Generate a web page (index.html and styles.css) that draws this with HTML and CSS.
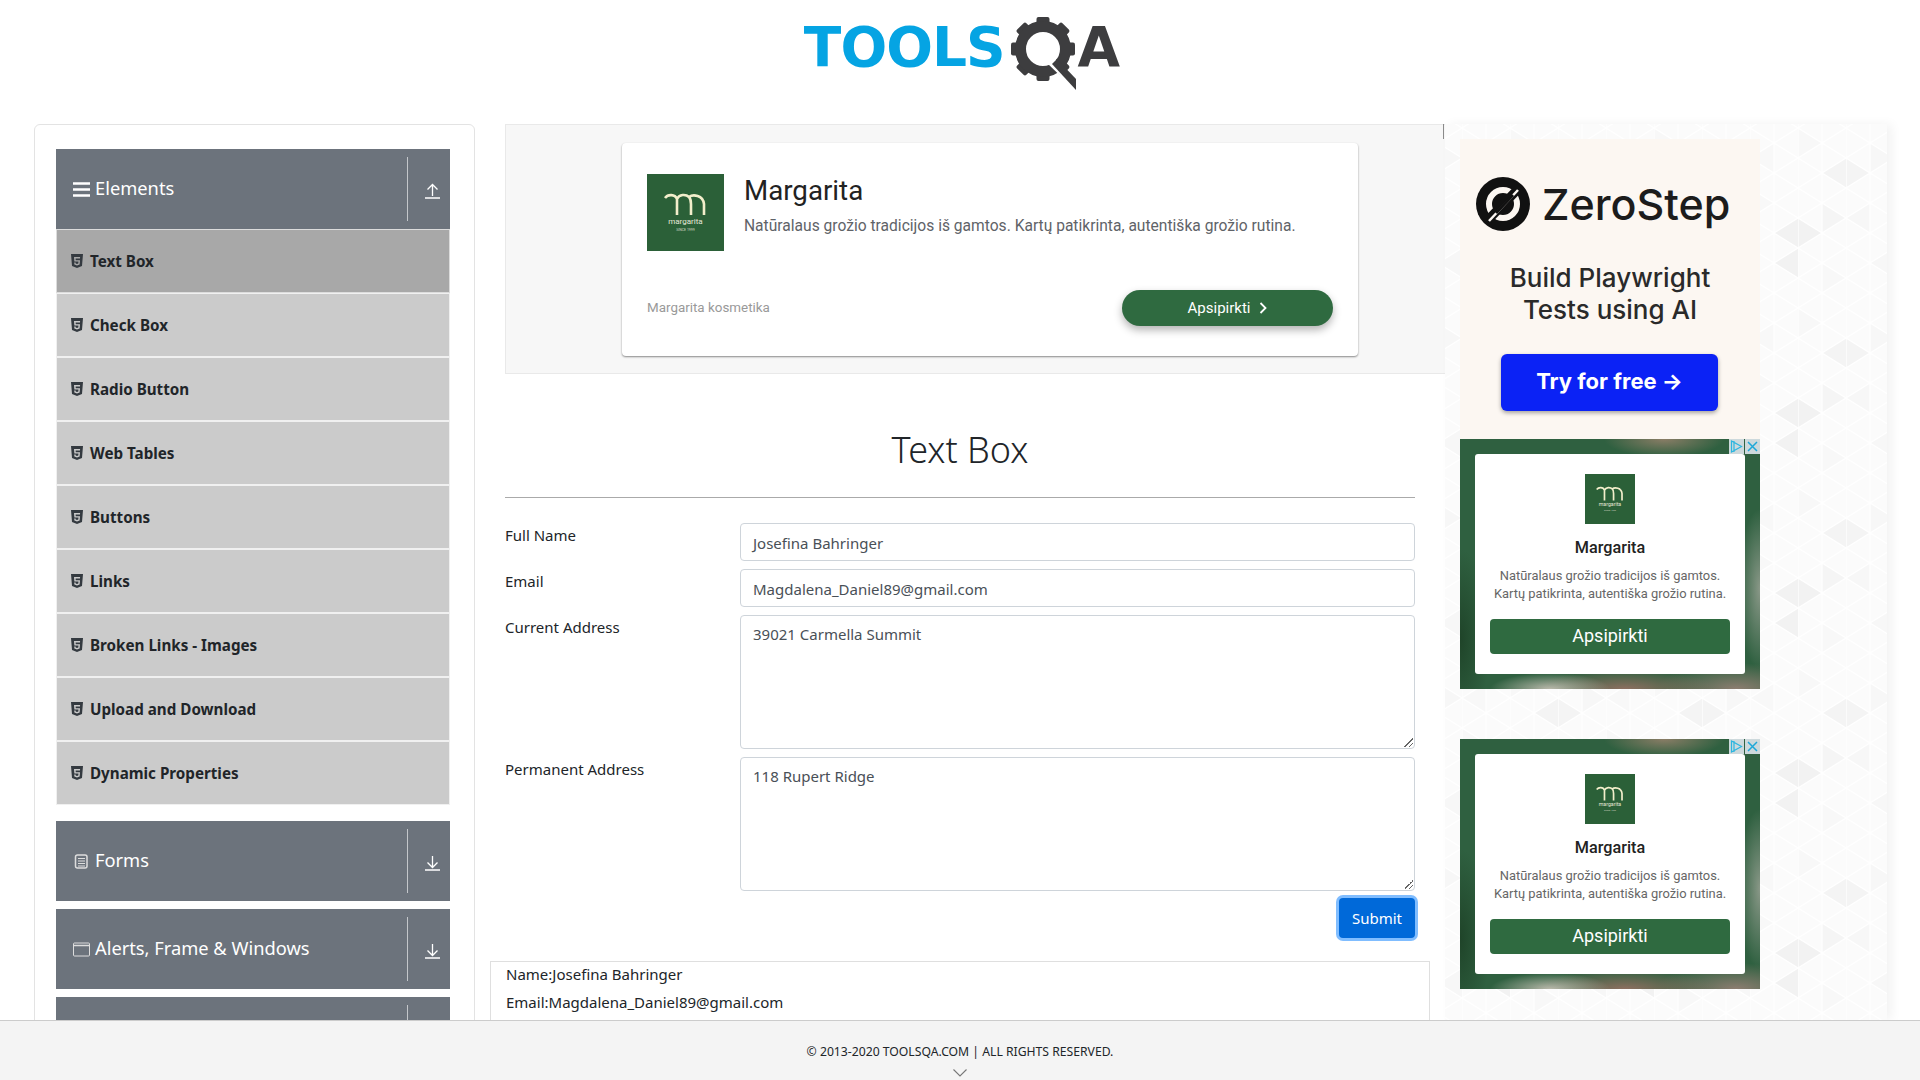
FILE: index.html
```html
<!DOCTYPE html>
<html>
<head>
	<title>ToolsQA</title>
	<link rel="stylesheet" href="styles.css">
</head>
<body>
	<header class="top">
		<div class="logo">
			<span class="logo_tools">TOOLS</span>
			<svg class="logo_gear" width="72" height="76" viewBox="0 0 72 76">
				<g fill="#3d3d3f" transform="translate(33 33)">
					<rect x="-6.5" y="-32" width="13" height="14" rx="2"/>
					<rect x="-6.5" y="-32" width="13" height="14" rx="2" transform="rotate(45)"/>
					<rect x="-6.5" y="-32" width="13" height="14" rx="2" transform="rotate(90)"/>
					<rect x="-6.5" y="-32" width="13" height="14" rx="2" transform="rotate(135)"/>
					<rect x="-6.5" y="-32" width="13" height="14" rx="2" transform="rotate(180)"/>
					<rect x="-6.5" y="-32" width="13" height="14" rx="2" transform="rotate(225)"/>
					<rect x="-6.5" y="-32" width="13" height="14" rx="2" transform="rotate(270)"/>
					<rect x="-6.5" y="-32" width="13" height="14" rx="2" transform="rotate(315)"/>
				</g>
				<circle cx="33" cy="33" r="22.5" fill="none" stroke="#3d3d3f" stroke-width="11"/>
				<path d="M37 47 L43 41 L66 66 L66 75 Z" fill="#fff"/>
				<path d="M42 48 L47 43 L66 63 L66 74 Z" fill="#3d3d3f"/>
			</svg>
			<span class="logo_a">A</span>
		</div>
	</header>

	<div class="page">
		<aside class="left_panel">
			<div class="group">
				<div class="group_head">
					<span class="group_title">
						<svg class="group_icon" width="17" height="15" viewBox="0 0 17 15"><path d="M0 1.500h17M0 7.500h17M0 13.500h17" stroke="#fff" stroke-width="2.400"/></svg>
						Elements
					</span>
					<span class="group_arrow">
						<svg width="15" height="16" viewBox="0 0 15 16"><path d="M7.500 13V1.500M2.500 6.500l5-5 5 5M0 15h15" fill="none" stroke="#fff" stroke-width="1.300"/></svg>
					</span>
				</div>
				<ul class="menu">
					<li class="active"><svg class="h5"><use href="#html5"/></svg>Text Box</li>
					<li><svg class="h5"><use href="#html5"/></svg>Check Box</li>
					<li><svg class="h5"><use href="#html5"/></svg>Radio Button</li>
					<li><svg class="h5"><use href="#html5"/></svg>Web Tables</li>
					<li><svg class="h5"><use href="#html5"/></svg>Buttons</li>
					<li><svg class="h5"><use href="#html5"/></svg>Links</li>
					<li><svg class="h5"><use href="#html5"/></svg>Broken Links - Images</li>
					<li><svg class="h5"><use href="#html5"/></svg>Upload and Download</li>
					<li><svg class="h5"><use href="#html5"/></svg>Dynamic Properties</li>
				</ul>
			</div>
			<div class="group">
				<div class="group_head">
					<span class="group_title">
						<svg class="group_icon" width="17" height="15" viewBox="0 0 17 15"><rect x="2.500" y="1" width="11.500" height="13" rx="2" fill="none" stroke="#ddd" stroke-width="1.500"/><path d="M5 4.500h7M5 7h7M5 9.500h7M5 12h7" stroke="#ddd"/></svg>
						Forms
					</span>
					<span class="group_arrow"><svg width="15" height="16" viewBox="0 0 15 16"><path d="M7.500 1v11.500M2.500 7.500l5 5 5-5M0 15h15" fill="none" stroke="#fff" stroke-width="1.300"/></svg></span>
				</div>
			</div>
			<div class="group">
				<div class="group_head">
					<span class="group_title">
						<svg class="group_icon" width="17" height="15" viewBox="0 0 17 15"><rect x=".5" y="1" width="16" height="13" rx="1" fill="none" stroke="#ddd"/><path d="M.5 3.500h16" stroke="#ddd" stroke-width="1.500"/></svg>
						Alerts, Frame &amp; Windows
					</span>
					<span class="group_arrow"><svg width="15" height="16" viewBox="0 0 15 16"><path d="M7.500 1v11.500M2.500 7.500l5 5 5-5M0 15h15" fill="none" stroke="#fff" stroke-width="1.300"/></svg></span>
				</div>
			</div>
			<div class="group">
				<div class="group_head">
					<span class="group_title">Widgets</span>
					<span class="group_arrow"></span>
				</div>
			</div>
		</aside>

		<main class="center">
			<div class="ad_top">
				<div class="ad_card">
					<div class="ad_card_top">
						<svg class="m_logo" width="77" height="77"><use href="#mlogo"/></svg>
						<div>
							<div class="ad_card_title">Margarita</div>
							<div class="ad_card_text">Natūralaus grožio tradicijos iš gamtos. Kartų patikrinta, autentiška grožio rutina.</div>
						</div>
					</div>
					<div class="ad_card_bottom">
						<span class="ad_card_brand">Margarita kosmetika</span>
						<span class="ad_card_btn">Apsipirkti
							<svg width="8" height="12" viewBox="0 0 8 12"><path d="M1.500 1l5 5-5 5" fill="none" stroke="#fff" stroke-width="1.800"/></svg>
						</span>
					</div>
				</div>
			</div>

			<h1 class="page_title">Text Box</h1>

			<form class="user_form">
				<div class="form_row">
					<label>Full Name</label>
					<div class="field">Josefina Bahringer</div>
				</div>
				<div class="form_row">
					<label>Email</label>
					<div class="field">Magdalena_Daniel89@gmail.com</div>
				</div>
				<div class="form_row">
					<label>Current Address</label>
					<div class="field area">39021 Carmella Summit</div>
				</div>
				<div class="form_row">
					<label>Permanent Address</label>
					<div class="field area">118 Rupert Ridge</div>
				</div>
				<div class="submit_row">
					<span class="submit">Submit</span>
				</div>
			</form>

			<div class="output">
				<p>Name:Josefina Bahringer</p>
				<p>Email:Magdalena_Daniel89@gmail.com</p>
			</div>
		</main>

		<aside class="right_ads">
			<svg class="tri_bg" width="442" height="896">
				<defs>
					<pattern id="tri_lines" width="48" height="30" patternUnits="userSpaceOnUse" patternTransform="translate(17 4)">
						<path d="M0 0L24 15L0 30M48 0L24 15L48 30M0 0V30M24 0V30" fill="none" stroke="#fff" stroke-width="1.200"/>
					</pattern>
					<pattern id="tri_dark" width="144" height="180" patternUnits="userSpaceOnUse" patternTransform="translate(65 4)">
						<path d="M144 90V120L120 105ZM0 90V120L24 105Z" fill="#f2f2f2"/>
						<path d="M48 30V60L24 45ZM48 30V60L72 45Z" fill="#f4f4f4"/>
						<path d="M144 120V150L120 135Z" fill="#f2f2f2"/>
						<path d="M24 75V105L48 90Z" fill="#f5f5f5"/>
						<path d="M72 15V45L96 30ZM96 120V150L72 135ZM72 75V105L48 90Z" fill="#f7f7f7"/>
						<path d="M120 15V45L96 30ZM24 135V165L48 150ZM96 60V90L120 75ZM0 0V30L24 15Z" fill="#f8f8f8"/>
					</pattern>
				</defs>
				<rect width="442" height="896" fill="#fbfbfb"/>
				<rect width="442" height="896" fill="url(#tri_dark)"/>
				<rect width="442" height="896" fill="url(#tri_lines)"/>
			</svg>
			<div class="zs_ad">
				<div class="zs_brand">
					<svg width="54" height="54" viewBox="0 0 54 54">
						<circle cx="27" cy="27" r="27" fill="#111"/>
						<circle cx="27" cy="27" r="14" fill="none" stroke="#fcf7f2" stroke-width="6"/>
						<path d="M10 45L44 10" stroke="#111" stroke-width="9"/>
						<path d="M13 44L42 13" stroke="#fcf7f2" stroke-width="2.500"/>
						<path d="M20 36L37 18" stroke="#111" stroke-width="3"/>
					</svg>
					<span>ZeroStep</span>
				</div>
				<div class="zs_text">Build Playwright<br>Tests using AI</div>
				<div class="zs_btn">Try for free →</div>
			</div>
			<div class="m_ad">
				<div class="ad_marks">
					<svg width="15" height="15" viewBox="0 0 15 15"><path d="M2.500 2v11l10-5.500zM5 2v11" fill="none" stroke="#2bb5e0" stroke-width="1.200"/></svg>
					<svg width="15" height="15" viewBox="0 0 15 15"><path d="M3 3l9 9M12 3l-9 9" stroke="#1ea7d8" stroke-width="1.500"/></svg>
				</div>
				<div class="m_box">
					<svg class="m_logo" width="50" height="50" viewBox="0 0 77 77"><use href="#mlogo"/></svg>
					<div class="m_title">Margarita</div>
					<div class="m_text">Natūralaus grožio tradicijos iš gamtos.<br>Kartų patikrinta, autentiška grožio rutina.</div>
					<div class="m_btn">Apsipirkti</div>
				</div>
			</div>
			<div class="m_ad second">
				<div class="ad_marks">
					<svg width="15" height="15" viewBox="0 0 15 15"><path d="M2.500 2v11l10-5.500zM5 2v11" fill="none" stroke="#2bb5e0" stroke-width="1.200"/></svg>
					<svg width="15" height="15" viewBox="0 0 15 15"><path d="M3 3l9 9M12 3l-9 9" stroke="#1ea7d8" stroke-width="1.500"/></svg>
				</div>
				<div class="m_box">
					<svg class="m_logo" width="50" height="50" viewBox="0 0 77 77"><use href="#mlogo"/></svg>
					<div class="m_title">Margarita</div>
					<div class="m_text">Natūralaus grožio tradicijos iš gamtos.<br>Kartų patikrinta, autentiška grožio rutina.</div>
					<div class="m_btn">Apsipirkti</div>
				</div>
			</div>
		</aside>
	</div>

	<footer class="bottom">
		<span>© 2013-2020 TOOLSQA.COM | ALL RIGHTS RESERVED.</span>
		<svg class="bottom_arrow" width="14" height="8" viewBox="0 0 14 8"><path d="M.5 .5L7 7L13.500 .5" fill="none" stroke="#777" stroke-width="1.100"/></svg>
	</footer>

	<svg class="defs" width="0" height="0">
		<defs>
			<symbol id="html5" viewBox="0 0 12 14">
				<path fill-rule="evenodd" fill="#343a40" d="M0 0H12L11 12L6 14L1 12ZM3 3L3.400 7.500H7.500L7.300 9.500L6 10L4.700 9.500L4.600 8.600H3.200L3.400 10.600L6 11.600L8.600 10.600L9 6.200H4.700L4.600 4.400H9L9.100 3Z"/>
			</symbol>
			<symbol id="mlogo" viewBox="0 0 77 77">
				<rect width="77" height="77" fill="#2b6038"/>
				<path d="M18 24C21 20 28 20 30 25V41M30 25C32 20 39 20 42 23C46 20 56 21 57 30V41M42 23C44 25 44 27 44 30V41" fill="none" stroke="#f2eecb" stroke-width="2.600"/>
				<text x="38.500" y="50" text-anchor="middle" font-family="Roboto, sans-serif" font-size="8" fill="#e8e8d8">margarita</text>
				<text x="38.500" y="57" text-anchor="middle" font-family="Roboto, sans-serif" font-size="3.500" fill="#d8d8c8">SINCE 1999</text>
			</symbol>
		</defs>
	</svg>
</body>
</html>
```

FILE: styles.css
```css
* {
	margin: 0;
	padding: 0;
	box-sizing: border-box;
}

ul {
	list-style: none;
}

html,
body {
	height: 100%;
	overflow: hidden;
}

body {
	background-color: #fff;
	color: #212529;
	font-family: "Noto Sans", "Open Sans", sans-serif;
	font-size: 15px;
}

.top {
	height: 124px;
	display: flex;
	justify-content: center;
}

.logo {
	display: flex;
	align-items: flex-start;
	padding-top: 16px;
	margin-left: 4px;
	height: 100px;
}

.logo_tools,
.logo_a {
	font-family: "DejaVu Sans", sans-serif;
	font-weight: 700;
	font-size: 55px;
	line-height: 44px;
	padding-top: 9px;
}

.logo_tools {
	color: #05a4e3;
	letter-spacing: -1px;
}

.logo_a {
	color: #3d3d3f;
	margin-left: -4px;
}

.logo_gear {
	margin-left: 5px;
}

.page {
	display: flex;
	align-items: flex-start;
	padding-left: 34px;
}

/* left menu */
.left_panel {
	width: 441px;
	height: 1000px;
	border: 1px solid #e3e3e3;
	border-radius: 6px;
	padding: 24px 24px 0 21px;
	margin-right: 30px;
	flex-shrink: 0;
}

.group {
	margin-bottom: 8px;
}

.group:first-child {
	margin-bottom: 16px;
}

.group_head {
	height: 80px;
	background-color: #6c737c;
	color: #fff;
	display: flex;
	align-items: center;
	justify-content: space-between;
	padding: 8px 10px 8px 17px;
}

.group_title {
	font-size: 18.300px;
	display: flex;
	align-items: center;
	gap: 5px;
	margin-top: -3px;
}

.group_icon {
	margin-top: 4px;
}

.group_arrow {
	width: 33px;
	height: 64px;
	border-left: 1px solid #c4c7cb;
	display: flex;
	align-items: center;
	justify-content: flex-end;
	padding-top: 4px;
}

.menu li {
	height: 64px;
	background-color: #cbcbcb;
	border: 1px solid #f0f0f0;
	display: flex;
	align-items: center;
	padding-left: 14px;
	font-weight: 700;
	font-size: 15.200px;
}

.menu li.active {
	background-color: #a8a8a8;
	border-color: #dcdcdc;
}

.h5 {
	width: 12px;
	height: 14px;
	margin-right: 7px;
}

/* middle */
.center {
	width: 940px;
	flex-shrink: 0;
}

.ad_top {
	height: 250px;
	background-color: #f7f7f7;
	border: 1px solid #e9e9e9;
	border-right: 0;
	padding: 18px 0 0 116px;
}

.ad_card {
	width: 736px;
	height: 213px;
	background-color: #fff;
	border-radius: 4px;
	box-shadow: 0 1px 2px rgba(0, 0, 0, .45);
	padding: 31px 25px 0;
	font-family: Roboto, sans-serif;
}

.ad_card_top {
	display: flex;
	gap: 20px;
	height: 85px;
}

.ad_card_title {
	font-size: 27.700px;
	line-height: 34px;
	color: #222;
}

.ad_card_text {
	font-size: 15.600px;
	color: #5f6368;
	margin-top: 9px;
}

.ad_card_bottom {
	display: flex;
	align-items: center;
	justify-content: space-between;
	margin-top: 31px;
}

.ad_card_brand {
	font-size: 13.400px;
	color: #999;
	margin-top: -2px;
}

.ad_card_btn {
	width: 211px;
	height: 36px;
	border-radius: 18px;
	background-color: #2f6a40;
	color: #fff;
	font-size: 15px;
	display: flex;
	align-items: center;
	justify-content: center;
	gap: 9px;
	box-shadow: 0 4px 8px rgba(0, 0, 0, .3);
}

.page_title {
	font-weight: 300;
	font-size: 36px;
	line-height: 50px;
	text-align: center;
	margin-top: 51px;
	height: 73px;
	border-bottom: 1px solid #aaa;
}

.center > .page_title,
.user_form {
	width: 910px;
}

.user_form {
	padding-top: 25px;
}

.form_row {
	display: flex;
	margin-bottom: 8px;
}

.form_row label {
	width: 235px;
	padding-top: 2px;
	flex-shrink: 0;
}

.field {
	flex: 1;
	height: 38px;
	border: 1px solid #ced4da;
	border-radius: 4px;
	padding: 7px 12px;
	color: #495057;
	line-height: 24px;
}

.field.area {
	height: 134px;
	padding-top: 6px;
	position: relative;
}

.field.area::after {
	content: "";
	position: absolute;
	right: 1px;
	bottom: 1px;
	width: 9px;
	height: 9px;
	background: linear-gradient(135deg, transparent 50%, #666 50%, #666 58%, transparent 58%, transparent 75%, #666 75%, #666 83%, transparent 83%);
}

.submit_row {
	display: flex;
	justify-content: flex-end;
	margin-top: -1px;
}

.submit {
	width: 76px;
	height: 40px;
	background-color: #0069d9;
	color: #fff;
	border-radius: 4px;
	box-shadow: 0 0 0 3px #80bdff;
	display: flex;
	align-items: center;
	justify-content: center;
}

.output {
	margin: 23px 0 0 -15px;
	width: 940px;
	height: 100px;
	border: 1px solid #dfdfdf;
	padding: 0 15px;
}

.output p {
	line-height: 24px;
	margin-bottom: 4px;
}

/* right ads */
.right_ads {
	position: relative;
	width: 442px;
	height: 896px;
	flex-shrink: 0;
	padding: 15px 0 0 15px;
	box-shadow: 5px 0 10px rgba(0, 0, 0, .05);
}

.right_ads::before {
	content: "";
	position: absolute;
	z-index: 1;
	left: -2px;
	top: 0;
	width: 1px;
	height: 15px;
	background-color: #8a8a8a;
}

.tri_bg {
	position: absolute;
	left: 0;
	top: 0;
}

.zs_ad,
.m_ad {
	position: relative;
	width: 300px;
}

.zs_ad {
	height: 300px;
	background-color: #fcf7f2;
	font-family: Inter, sans-serif;
	text-align: center;
	color: #2a2a2a;
}

.zs_brand {
	display: flex;
	align-items: center;
	gap: 12px;
	padding: 38px 0 0 16px;
	font-size: 43px;
	font-weight: 500;
	color: #1c1c1c;
}

.zs_text {
	font-size: 26px;
	font-weight: 500;
	line-height: 32px;
	margin-top: 31px;
}

.zs_btn {
	width: 217px;
	height: 57px;
	margin: 28px 0 0 41px;
	background-color: #0b22f5;
	color: #fff;
	border-radius: 6px;
	font-size: 22px;
	font-weight: 700;
	line-height: 55px;
	box-shadow: 0 2px 4px rgba(0, 0, 0, .35);
}

.m_ad {
	height: 250px;
	padding: 15px;
	background-color: #2f6040;
	background-image:
		radial-gradient(ellipse 60px 18px at 68% 0, #8a7d66, transparent),
		radial-gradient(ellipse 60px 16px at 30% 100%, #b8b8aa, transparent),
		radial-gradient(ellipse 90px 20px at 55% 100%, #8c6f60, transparent),
		radial-gradient(ellipse 80px 26px at 92% 100%, #8c7d70, transparent),
		radial-gradient(ellipse 22px 80px at 100% 60%, #8a9888, transparent),
		radial-gradient(ellipse 30px 90px at 0 80%, #1f4429, transparent);
}

.m_ad.second {
	margin-top: 50px;
}

.ad_marks {
	position: absolute;
	top: 0;
	right: 0;
	display: flex;
	gap: 1px;
	z-index: 2;
}

.ad_marks svg {
	background-color: #cdd9dc;
	display: block;
}

.m_box {
	position: relative;
	z-index: 1;
	height: 220px;
	background-color: #fff;
	border-radius: 3px;
	padding: 20px 15px 0;
	font-family: Roboto, sans-serif;
	text-align: center;
}

.m_box .m_logo {
	display: block;
	margin: 0 auto;
}

.m_title {
	font-size: 16.200px;
	font-weight: 500;
	color: #222;
	margin-top: 14px;
}

.m_text {
	font-size: 12.900px;
	line-height: 18px;
	color: #666;
	margin-top: 10px;
}

.m_btn {
	height: 35px;
	margin-top: 16px;
	background-color: #2f6a40;
	color: #fff;
	border-radius: 4px;
	font-size: 18px;
	line-height: 33px;
}

/* footer */
.bottom {
	position: fixed;
	left: 0;
	right: 0;
	bottom: 0;
	height: 60px;
	background-color: #f4f4f4;
	border-top: 1px solid #ccc;
	text-align: center;
	font-size: 12.200px;
	padding-top: 22px;
}

.bottom span {
	display: block;
	line-height: 17px;
}

.bottom_arrow {
	display: block;
	margin: 9px auto 0;
}

.defs {
	position: absolute;
}
```
